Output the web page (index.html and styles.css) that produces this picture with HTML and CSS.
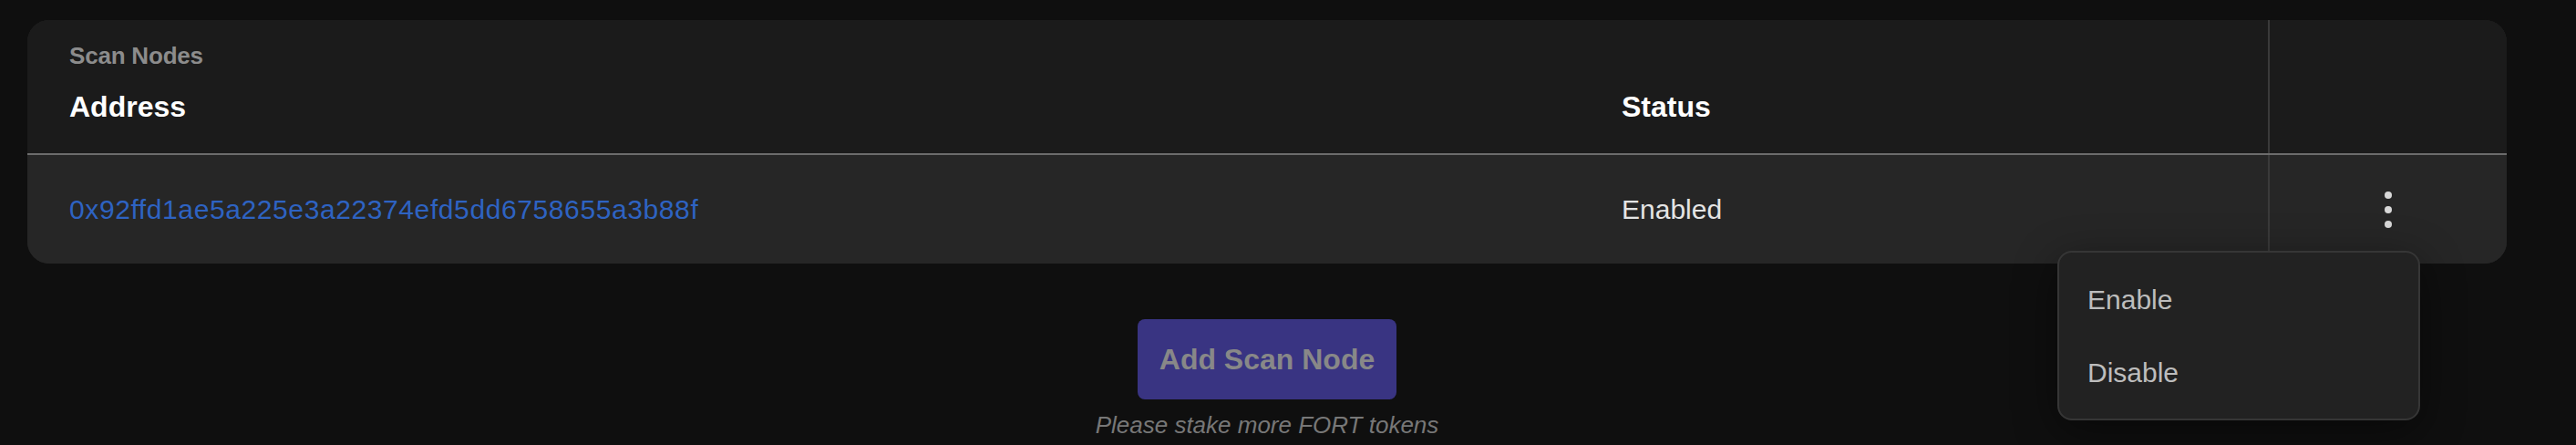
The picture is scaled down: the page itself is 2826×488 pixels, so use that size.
FILE: index.html
```html
<!DOCTYPE html>
<html lang="en">
<head>
<meta charset="utf-8">
<title>Scan Nodes</title>
<link rel="stylesheet" href="styles.css">
</head>
<body>
<div class="page">
  <section class="card">
    <div class="thead">
      <div class="th th-address">
        <div class="caption">Scan Nodes</div>
        <div class="th-label">Address</div>
      </div>
      <div class="th">
        <div class="th-label">Status</div>
      </div>
      <div class="th th-actions"></div>
    </div>
    <div class="trow">
      <div class="td"><a class="addr" href="#">0x92ffd1ae5a225e3a22374efd5dd6758655a3b88f</a></div>
      <div class="td status">Enabled</div>
      <div class="td td-actions">
        <button class="kebab" type="button" aria-label="More">
          <span class="dot"></span><span class="dot"></span><span class="dot"></span>
        </button>
      </div>
    </div>
  </section>
  <div class="footer">
    <button class="add-btn" type="button">Add Scan Node</button>
    <p class="note">Please stake more FORT tokens</p>
  </div>
  <ul class="menu">
    <li class="menu-item">Enable</li>
    <li class="menu-item">Disable</li>
  </ul>
</div>
</body>
</html>
```

FILE: styles.css
```css
* { box-sizing: border-box; }

html, body {
  margin: 0;
  padding: 0;
  background: #0f0f0f;
  font-family: "Liberation Sans", Arial, Helvetica, sans-serif;
}

.page {
  position: relative;
  width: 2826px;
  height: 488px;
  padding: 22px 0 0 30px;
  overflow: hidden;
}

.card {
  width: 2720px;
  border-radius: 24px;
  overflow: hidden;
  background: #262626;
}

.thead,
.trow {
  display: grid;
  grid-template-columns: 1703px 755px 262px;
}

.thead {
  background: #1b1b1b;
  border-bottom: 2px solid #6c6c6c;
  height: 148px;
  align-items: end;
}

.th {
  padding: 0 0 33px 46px;
  height: 100%;
  display: flex;
  flex-direction: column;
  justify-content: flex-end;
}

.th-address {
  justify-content: space-between;
  padding-top: 24px;
}

.caption {
  font-size: 26px;
  line-height: 30px;
  font-weight: 700;
  color: #8c8c8c;
  letter-spacing: -0.2px;
}

.th-label {
  font-size: 32px;
  line-height: 36px;
  font-weight: 700;
  color: #ffffff;
}

.th-actions {
  border-left: 2px solid #3a3a3a;
  padding: 0;
}

.trow {
  height: 119px;
  align-items: center;
  background: #262626;
}

.td {
  padding-left: 46px;
  font-size: 30px;
  line-height: 34px;
}

.addr {
  color: #2e63c2;
  text-decoration: none;
  letter-spacing: 0.6px;
}

.status {
  color: #e4e4e4;
}

.td-actions {
  height: 100%;
  padding: 0;
  border-left: 2px solid #3a3a3a;
  display: flex;
  align-items: center;
  justify-content: center;
}

.kebab {
  background: none;
  border: 0;
  padding: 0;
  display: flex;
  flex-direction: column;
  gap: 8px;
  cursor: pointer;
}

.dot {
  display: block;
  width: 8px;
  height: 8px;
  border-radius: 50%;
  background: #d8d8d8;
}

.footer {
  width: 2720px;
  display: flex;
  flex-direction: column;
  align-items: center;
}

.add-btn {
  margin-top: 61px;
  width: 284px;
  height: 88px;
  padding: 0;
  border: 0;
  border-radius: 8px;
  background: #393482;
  color: #888888;
  font-family: inherit;
  font-size: 32px;
  line-height: 36px;
  font-weight: 700;
}

.note {
  margin: 13px 0 0;
  font-size: 26px;
  line-height: 30px;
  font-style: italic;
  color: #777777;
}

.menu {
  position: absolute;
  left: 2257px;
  top: 275px;
  width: 398px;
  height: 186px;
  margin: 0;
  padding: 12px 0;
  list-style: none;
  background: #222222;
  border: 2px solid #363636;
  border-radius: 16px;
  box-shadow: 0 12px 48px rgba(0, 0, 0, 0.45);
}

.menu-item {
  height: 80px;
  display: flex;
  align-items: center;
  padding-left: 31px;
  font-size: 30px;
  line-height: 34px;
  color: #bdbdbd;
}
```
